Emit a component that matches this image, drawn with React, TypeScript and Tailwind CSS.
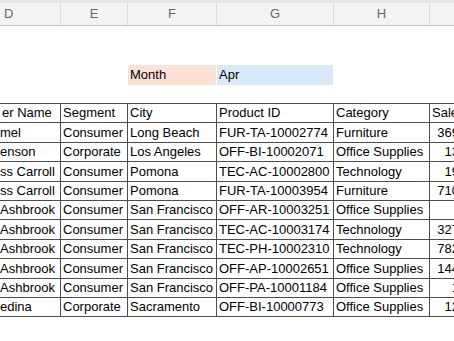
const cols = 'grid grid-cols-[60px_66px_88px_116px_95px_60px] gap-x-px';

const letters = ['D', 'E', 'F', 'G', 'H', ''];

const header = ['er Name', 'Segment', 'City', 'Product ID', 'Category', 'Sales'];

const rows: string[][] = [
  ['mel', 'Consumer', 'Long Beach', 'FUR-TA-10002774', 'Furniture', '369.91'],
  ['enson', 'Corporate', 'Los Angeles', 'OFF-BI-10002071', 'Office Supplies', '13.36'],
  ['ss Carroll', 'Consumer', 'Pomona', 'TEC-AC-10002800', 'Technology', '19.46'],
  ['ss Carroll', 'Consumer', 'Pomona', 'FUR-TA-10003954', 'Furniture', '710.53'],
  ['Ashbrook', 'Consumer', 'San Francisco', 'OFF-AR-10003251', 'Office Supplies', '6.4'],
  ['Ashbrook', 'Consumer', 'San Francisco', 'TEC-AC-10003174', 'Technology', '327.34'],
  ['Ashbrook', 'Consumer', 'San Francisco', 'TEC-PH-10002310', 'Technology', '782.24'],
  ['Ashbrook', 'Consumer', 'San Francisco', 'OFF-AP-10002651', 'Office Supplies', '144.23'],
  ['Ashbrook', 'Consumer', 'San Francisco', 'OFF-PA-10001184', 'Office Supplies', '1.65'],
  ['edina', 'Corporate', 'Sacramento', 'OFF-BI-10000773', 'Office Supplies', '12.64'],
];

export default function App() {
  return (
    <div className="w-[454px] h-[341px] overflow-hidden bg-white text-[13px] text-black font-['Liberation_Sans',Arial,sans-serif]">
      {/* Column letters */}
      <div className="h-[26px] bg-[#f3f3f3] border-t-[3px] border-[#e4e4e4] border-b border-b-[#c6c6c6]">
        <div className={`${cols} h-full`}>
          {letters.map((l, i) => (
            <div
              key={i}
              className={`flex items-center text-[#666666] border-r border-[#dcdcdc] -mr-px ${i === 0 ? 'justify-start pl-[4px]' : 'justify-center'}`}
            >
              {l}
            </div>
          ))}
        </div>
      </div>

      {/* Empty rows + Month selector */}
      <div className="h-[39px]" />
      <div className={`${cols} h-[19px] items-stretch`}>
        <div />
        <div />
        <div className="bg-[#fbe2d5] flex items-center pl-[2px] mb-px">Month</div>
        <div className="bg-[#dae9f8] flex items-center pl-[2px] mb-px">Apr</div>
      </div>
      <div className="h-[19px]" />

      {/* Data table */}
      <div className={`${cols} bg-[#4d4d4d] gap-y-px border-y border-[#4d4d4d]`}>
        {header.map((h, i) => (
          <div key={i} className="h-[18.4px] bg-white flex items-center pl-[2px] whitespace-nowrap overflow-hidden">
            {h}
          </div>
        ))}
        {rows.map((r, ri) =>
          r.map((c, ci) => (
            <div
              key={`${ri}-${ci}`}
              className={`h-[18.4px] bg-white flex items-center whitespace-nowrap overflow-hidden ${ci === 5 ? 'justify-end pr-[13px]' : ci === 0 ? 'pl-0' : 'pl-[2px]'}`}
            >
              {c}
            </div>
          ))
        )}
      </div>
    </div>
  );
}
